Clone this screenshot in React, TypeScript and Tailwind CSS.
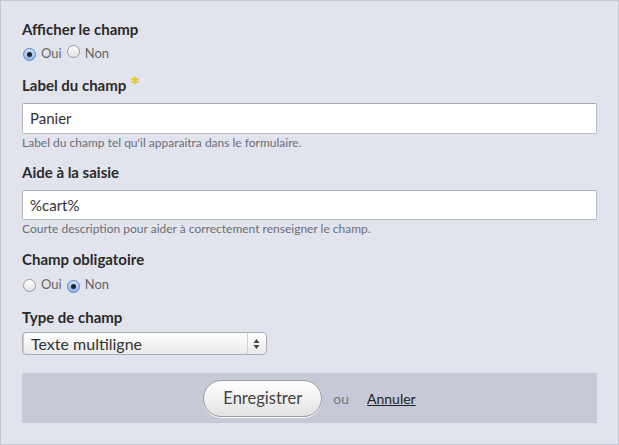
import React from "react";

function Radio({ checked }: { checked: boolean }) {
  return (
    <span
      className={
        "inline-flex items-center justify-center w-[13px] h-[13px] rounded-full border " +
        (checked
          ? "border-[#5b86c2] bg-gradient-to-b from-[#cfe0f5] to-[#8fb5e6]"
          : "border-[#9a9a9a] bg-gradient-to-b from-[#ffffff] to-[#e3e3e3]")
      }
    >
      {checked && <span className="block w-[5px] h-[5px] rounded-full bg-[#1c2430]" />}
    </span>
  );
}

function RadioGroup({ value, mt }: { value: "oui" | "non"; mt: string }) {
  return (
    <div className={"flex items-center h-[14px] text-[13px] text-[#666] ml-[1px] " + mt}>
      <Radio checked={value === "oui"} />
      <span className="ml-[5px]">Oui</span>
      <span className="ml-[5px]"><Radio checked={value === "non"} /></span>
      <span className="ml-[5px]">Non</span>
    </div>
  );
}

function Heading({ children }: { children: React.ReactNode }) {
  return <div className="text-[15px] leading-[18px] font-bold text-[#2b2b2b]">{children}</div>;
}

export default function App() {
  return (
    <div
      className="w-[619px] h-[445px] bg-[#e1e4ed] border border-[#c3c8d3] px-[21px] pt-[19px]"
      style={{ fontFamily: "Lato, 'Open Sans', sans-serif" }}
    >
      <Heading>Afficher le champ</Heading>
      <RadioGroup value="oui" mt="mt-[9px]" />

      <div className="mt-[15px] flex items-start">
        <Heading>Label du champ</Heading>
        <span className="ml-[5px] -mt-[1px] text-[10px] text-[#e0c82a] font-bold leading-none">✻</span>
      </div>
      <div className="mt-[9px] h-[31px] bg-white border border-[#b9bcc2] border-t-[#a8abb1] rounded-[2px] flex items-center px-[7px] text-[15px] text-[#333]">
        Panier
      </div>
      <div className="mt-[2px] text-[12px] leading-[14px] text-[#6b6e75]">
        Label du champ tel qu'il apparaitra dans le formulaire.
      </div>

      <div className="mt-[13px]">
        <Heading>Aide à la saisie</Heading>
      </div>
      <div className="mt-[9px] h-[30px] bg-white border border-[#b9bcc2] border-t-[#a8abb1] rounded-[2px] flex items-center px-[7px] text-[15px] text-[#333]">
        %cart%
      </div>
      <div className="mt-[2px] text-[12px] leading-[14px] text-[#6b6e75]">
        Courte description pour aider à correctement renseigner le champ.
      </div>

      <div className="mt-[14px]">
        <Heading>Champ obligatoire</Heading>
      </div>
      <RadioGroup value="non" mt="mt-[10px]" />

      <div className="mt-[16px]">
        <Heading>Type de champ</Heading>
      </div>
      <div className="mt-[6px] w-[245px] h-[23px] rounded-[4px] border border-[#a9acb2] bg-gradient-to-b from-[#ffffff] to-[#e9e9e9] shadow-[inset_1px_0_0_#d0d0d0] flex items-center pl-[8px] pr-[4px] text-[16px] text-[#333]">
        <span className="flex-1">Texte multiligne</span>
        <span className="w-px h-[21px] bg-[#d0d0d0] mr-[5px]" />
        <svg width="7" height="12" viewBox="0 0 7 12" className="mr-[2px]">
          <path d="M3.5 1 L6.5 5 H0.5 Z" fill="#444" />
          <path d="M3.5 11 L6.5 7 H0.5 Z" fill="#444" />
        </svg>
      </div>

      <div className="mt-[18px] h-[50px] bg-[#c5cad6] flex items-center justify-center">
        <button className="w-[119px] h-[37px] rounded-full border border-[#9a9ca2] bg-gradient-to-b from-[#ffffff] to-[#e2e2e2] text-[16.5px] text-[#444] shadow-[0_1px_0_#ffffff]">
          Enregistrer
        </button>
        <span className="ml-[11px] text-[14px] text-[#777]">ou</span>
        <a className="ml-[18px] text-[14px] text-[#222] underline">Annuler</a>
      </div>
    </div>
  );
}
